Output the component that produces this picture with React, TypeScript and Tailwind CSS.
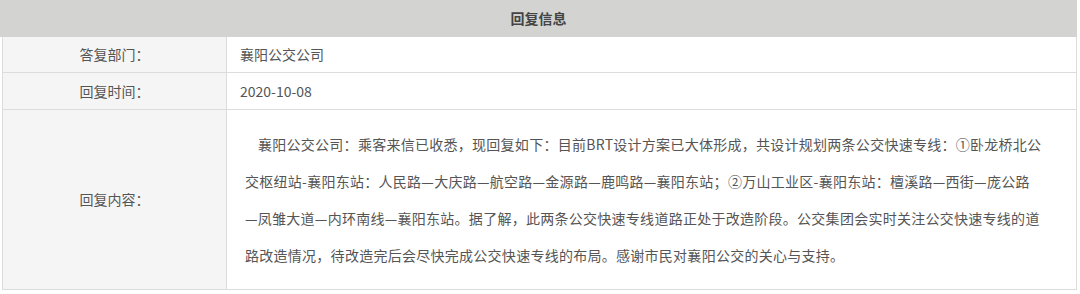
import React from "react";

const font = { fontFamily: '"Microsoft YaHei", "Noto Sans CJK SC", "Noto Sans", sans-serif' };

export default function App() {
  const lines = [
    "襄阳公交公司：乘客来信已收悉，现回复如下：目前BRT设计方案已大体形成，共设计规划两条公交快速专线：①卧龙桥北公",
    "交枢纽站-襄阳东站：人民路—大庆路—航空路—金源路—鹿鸣路—襄阳东站；②万山工业区-襄阳东站：檀溪路—西街—庞公路",
    "—凤雏大道—内环南线—襄阳东站。据了解，此两条公交快速专线道路正处于改造阶段。公交集团会实时关注公交快速专线的道",
    "路改造情况，待改造完后会尽快完成公交快速专线的布局。感谢市民对襄阳公交的关心与支持。",
  ];
  return (
    <div className="w-[1080px] h-[294px] bg-white text-[14px] text-[#555]" style={font}>
      <div className="w-[1077px] h-[37px] bg-[#d3d4d2] flex items-center justify-center font-bold text-[#444]">
        回复信息
      </div>
      <div className="ml-[2px] w-[1075px] border-x border-b border-[#dcdcdc] flex flex-col">
        <div className="flex h-[36px] border-b border-[#dcdcdc]">
          <div className="w-[224px] bg-[#f5f5f5] border-r border-[#dcdcdc] flex items-center justify-center">答复部门：</div>
          <div className="flex-1 flex items-center pl-[13px]">襄阳公交公司</div>
        </div>
        <div className="flex h-[37px] border-b border-[#dcdcdc]">
          <div className="w-[224px] bg-[#f5f5f5] border-r border-[#dcdcdc] flex items-center justify-center">回复时间：</div>
          <div className="flex-1 flex items-center pl-[13px]">2020-10-08</div>
        </div>
        <div className="flex h-[179px]">
          <div className="w-[224px] bg-[#f5f5f5] border-r border-[#dcdcdc] flex items-center justify-center">回复内容：</div>
          <div className="flex-1 flex flex-col justify-center pl-[18px] leading-[37px] whitespace-nowrap tracking-[0.27px]">
            {lines.map((l, i) => (
              <div key={i} className={i === 0 ? "pl-[13px]" : ""}>{l}</div>
            ))}
          </div>
        </div>
      </div>
    </div>
  );
}
